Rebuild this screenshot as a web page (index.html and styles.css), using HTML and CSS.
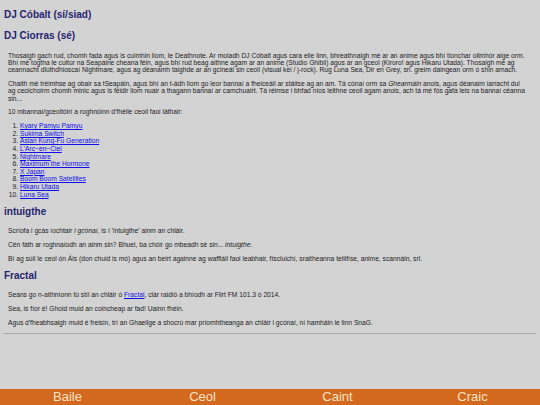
FILE: index.html
```html
<!DOCTYPE html>
<html lang="ga">
<head>
<meta charset="utf-8">
<title>intuigthe</title>
<link rel="stylesheet" href="styles.css">
</head>
<body>
<main class="content">
  <h2 class="title">DJ Cóbalt (sí/siad)</h2>
  <h2 class="title">DJ Ciorras (sé)</h2>
  <p class="text">Thosaigh gach rud, chomh fada agus is cuimhin liom, le Deathnote. Ar moladh DJ Cóbalt agus cara eile linn, bhreathnaigh mé ar an anime agus bhí tionchar ollmhór aige orm. Bhí mé tógtha le cultúr na Seapáine cheana féin, agus bhí rud beag aithne agam ar an anime (Studio Ghibli) agus ar an gceol (Kiroro! agus Hikaru Utada). Thosaigh mé ag ceannacht dlúthdhioscaí Nightmare, agus ag déanamh taighde ar an gcineál sin ceoil (visual kei / j-rock). Rug Luna Sea, Dir en Grey, srl. greim daingean orm ó shin amach.</p>
  <p class="text">Chaith mé tréimhse ag obair sa tSeapáin, agus bhí an t-ádh liom go leor bannaí a fheiceáil ar stáitse ag an am. Tá cónaí orm sa <em>Ghearmáin</em> anois, agus déanaim iarracht dul ag ceolchoirm chomh minic agus is féidir liom nuair a thagann bannaí ar camchuairt. Tá réimse i bhfad níos leithne ceoil agam anois, ach tá mé fós gafa leis na bannaí céanna sin...</p>
  <p class="text">10 mbannaí/gceoltóirí a roghnóinn d'fhéile ceoil faoi láthair:</p>
  <ol class="picks">
    <li><a href="#">Kyary Pamyu Pamyu</a></li>
    <li><a href="#">Sukima Switch</a></li>
    <li><a href="#">Asian Kung-Fu Generation</a></li>
    <li><a href="#">L'Arc~en~Ciel</a></li>
    <li><a href="#">Nightmare</a></li>
    <li><a href="#">Maximum the Hormone</a></li>
    <li><a href="#">X Japan</a></li>
    <li><a href="#">Boom Boom Satellites</a></li>
    <li><a href="#">Hikaru Utada</a></li>
    <li><a href="#">Luna Sea</a></li>
  </ol>
  <h2 class="title">intuigthe</h2>
  <p class="text">Scríofa i gcás íochtair <em>i gcónaí</em>, is í 'intuigthe' ainm an chláir.</p>
  <p class="text">Cén fáth ar roghnaíodh an ainm sin? Bhuel, ba chóir go mbeadh sé sin... <em>intuigthe</em>.</p>
  <p class="text">Bí ag súil le ceol ón Áis (don chuid is mó) agus an beirt againne ag waffláil faoi leabhair, físcluichí, sraitheanna teilifíse, anime, scannáin, srl.</p>
  <h2 class="title">Fractal</h2>
  <p class="text">Seans go n-aithníonn tú stíl an chláir ó <a href="#">Fractal</a>, clár raidió a bhíodh ar Flirt FM 101.3 ó 2014.</p>
  <p class="text">Sea, is fíor é! Ghoid muid an coincheap ar fad! Uainn fhéin.</p>
  <p class="text">Agus d'fheabhsaigh muid é freisin, trí an Ghaeilge a shocrú mar príomhtheanga an chláir i gcónaí, ní hamháin le linn SnaG.</p>
  <hr class="rule">
</main>
<nav class="tabs">
  <a class="tab" href="#">Baile</a>
  <a class="tab" href="#">Ceol</a>
  <a class="tab" href="#">Caint</a>
  <a class="tab" href="#">Craic</a>
</nav>
</body>
</html>
```

FILE: styles.css
```css
html, body {
  margin: 0;
  padding: 0;
  height: 100%;
}

body {
  display: flex;
  flex-direction: column;
  background: #d3d3d3;
  font-family: "Liberation Sans", Arial, sans-serif;
  color: #1c1c1c;
  overflow: hidden;
}

.content {
  flex: 1;
  padding: 0 4px;
  min-height: 0;
}

.title {
  font-size: 10px;
  line-height: 12px;
  font-weight: bold;
  color: #25256f;
  margin: 8px 0 9.2px;
}

.content > .title:first-child {
  margin-top: 9.3px;
}

.text {
  font-size: 6.7px;
  line-height: 7.3px;
  margin: 6.5px 0;
  padding: 0 10px 0 4px;
}

.picks {
  font-size: 6.7px;
  line-height: 7.6px;
  margin: 6.5px 0 8px;
  padding: 0 0 0 16px;
}

a {
  color: #1010e6;
}

.rule {
  border: 0;
  border-top: 1px solid #a9a9a9;
  margin: 6.5px 0 0;
  height: 0;
}

.tabs {
  display: grid;
  grid-template-columns: repeat(4, 1fr);
  background: #d2691e;
  height: 16px;
}

.tab {
  color: #fde3c6;
  text-decoration: none;
  text-align: center;
  font-size: 13px;
  line-height: 16px;
}
```
